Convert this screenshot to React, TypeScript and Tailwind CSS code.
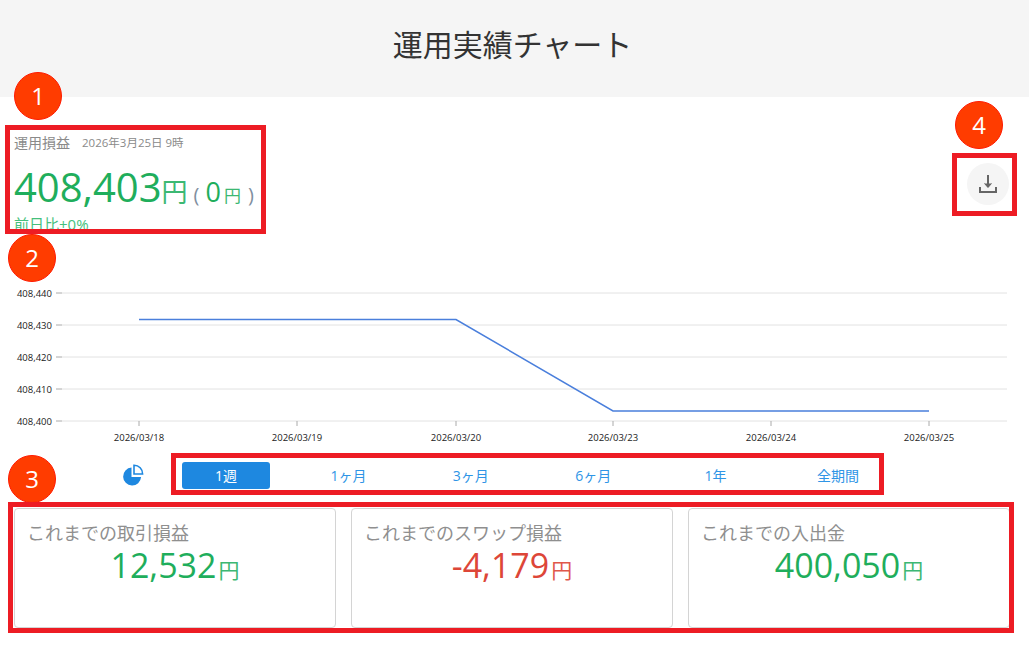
const font = "font-['Open_Sans','Noto_Sans_CJK_JP',sans-serif]"

const yTicks = [
  { label: "408,440", y: 293 },
  { label: "408,430", y: 325 },
  { label: "408,420", y: 357 },
  { label: "408,410", y: 389 },
  { label: "408,400", y: 421 },
]

const xTicks = [
  { label: "2026/03/18", x: 139 },
  { label: "2026/03/19", x: 297 },
  { label: "2026/03/20", x: 456 },
  { label: "2026/03/23", x: 613 },
  { label: "2026/03/24", x: 771 },
  { label: "2026/03/25", x: 929 },
]

const periods = ["1週", "1ヶ月", "3ヶ月", "6ヶ月", "1年", "全期間"]

const cards = [
  { title: "これまでの取引損益", value: "12,532", color: "text-[#1fae5c]", unit: "text-[#3cb873]" },
  { title: "これまでのスワップ損益", value: "-4,179", color: "text-[#dd4638]", unit: "text-[#e0574a]" },
  { title: "これまでの入出金", value: "400,050", color: "text-[#1fae5c]", unit: "text-[#3cb873]" },
]

function Marker({ n, className }: { n: number; className: string }) {
  return (
    <div
      className={`absolute flex h-[48px] w-[48px] items-center justify-center rounded-full border border-[#ff1a00] bg-[#ff3c00] text-[24px] text-white ${className}`}
    >
      {n}
    </div>
  )
}

function Chart() {
  return (
    <svg width="1029" height="170" viewBox="0 280 1029 170" className="block">
      {yTicks.map((t) => (
        <g key={t.label}>
          <line x1="56" x2="62" y1={t.y} y2={t.y} stroke="#aaa" />
          <line x1="62" x2="1007" y1={t.y} y2={t.y} stroke="#e2e2e2" />
          <text x="52" y={t.y + 4} textAnchor="end" fontSize="9.5" fill="#222" className={font}>
            {t.label}
          </text>
        </g>
      ))}
      {xTicks.map((t) => (
        <g key={t.label}>
          <line x1={t.x} x2={t.x} y1="421" y2="426" stroke="#aaa" />
          <text x={t.x} y="441" textAnchor="middle" fontSize="9.5" fill="#222" className={font}>
            {t.label}
          </text>
        </g>
      ))}
      <polyline
        points="139,319.5 456,319.5 613,411 929,411"
        fill="none"
        stroke="#4a7fdc"
        strokeWidth="1.5"
      />
    </svg>
  )
}

export default function App() {
  return (
    <div className={`relative h-[645px] w-[1029px] overflow-hidden bg-white ${font}`}>
      <header className="flex h-[97px] items-center justify-center bg-[#f5f5f5] pb-[8px] pr-[4px]">
        <h1 className="text-[30px] text-[#333]">運用実績チャート</h1>
      </header>

      <section className="flex h-[183px] justify-between pl-[14px] pr-[20px] pt-[35px]">
        <div>
          <div className="flex items-center text-[#8a8a8a]">
            <span className="text-[14px] leading-[22px]">運用損益</span>
            <span className="ml-[12px] text-[11.5px] leading-[22px]">2026年3月25日 9時</span>
          </div>
          <div className="mt-[13px] flex items-baseline leading-[40px]">
            <span className="text-[40px] text-[#1fae5c]">408,403</span>
            <span className="text-[26px] text-[#3cb873]">円</span>
            <span className="ml-[6px] text-[20px] text-[#7f8fa0]">(</span>
            <span className="ml-[6px] text-[27px] text-[#1fae5c]">0</span>
            <span className="ml-[3px] text-[17px] text-[#3cb873]">円</span>
            <span className="ml-[7px] text-[20px] text-[#7f8fa0]">)</span>
          </div>
          <div className="-mt-[2px] text-[15px] leading-[20px] text-[#45bf7c]">前日比+0%</div>
        </div>
        <button className="mt-[31px] flex h-[42px] w-[42px] items-center justify-center rounded-full bg-[#f5f5f5]">
          <svg width="22" height="22" viewBox="0 0 22 22" fill="none" stroke="#666" strokeWidth="2">
            <path d="M11 2v12" />
            <path d="M7.5 10.5 11 14.5l3.5-4" fill="#666" strokeWidth="1" />
            <path d="M3 14v5h16v-5" />
          </svg>
        </button>
      </section>

      <Chart />

      <nav className="flex h-[40px] items-center pl-[122px] pt-[10px]">
        <svg width="22" height="22" viewBox="0 0 22 22" className="mr-[38px] shrink-0">
          <path d="M9.5 3.5a9 9 0 1 0 9.6 9.6h-9.6z" fill="#1e88e0" />
          <path d="M12 1.2a8.5 8.5 0 0 1 8.6 8.8H12z" fill="#fff" stroke="#1e88e0" strokeWidth="1.6" />
        </svg>
        <div className="flex gap-[34.4px]">
          {periods.map((p, i) => (
            <button
              key={p}
              className={`h-[27px] w-[88px] shrink-0 rounded-[3px] text-[14px] ${
                i === 0 ? "bg-[#1e88e0] text-white" : "text-[#2f95e6]"
              }`}
            >
              {p}
            </button>
          ))}
        </div>
      </nav>

      <section className="grid grid-cols-3 gap-[15px] pl-[14px] pr-[19px] pt-[18px]">
        {cards.map((c) => (
          <div key={c.title} className="h-[120px] rounded-[4px] border border-[#d4d4d4] bg-white px-[12px] pt-[11px]">
            <div className="text-[18px] leading-[26px] text-[#8f8f8f]">{c.title}</div>
            <div className="flex items-baseline justify-center leading-[38px]">
              <span className={`text-[34px] ${c.color}`}>{c.value}</span>
              <span className={`ml-[2px] text-[21px] ${c.unit}`}>円</span>
            </div>
          </div>
        ))}
      </section>

      {/* Annotations laid over the screenshot */}
      <Marker n={1} className="left-[14px] top-[72px]" />
      <Marker n={2} className="left-[8px] top-[234px]" />
      <Marker n={3} className="left-[8px] top-[455px]" />
      <Marker n={4} className="left-[955px] top-[101px]" />
      <div className="absolute left-[5px] top-[125px] h-[109px] w-[261px] border-[5px] border-[#ed1c24]" />
      <div className="absolute left-[952px] top-[153px] h-[63px] w-[65px] border-[5px] border-[#ed1c24]" />
      <div className="absolute left-[171px] top-[453px] h-[42px] w-[713px] border-[5px] border-[#ed1c24]" />
      <div className="absolute left-[8px] top-[502px] h-[131px] w-[1006px] border-[5px] border-[#ed1c24]" />
    </div>
  )
}
